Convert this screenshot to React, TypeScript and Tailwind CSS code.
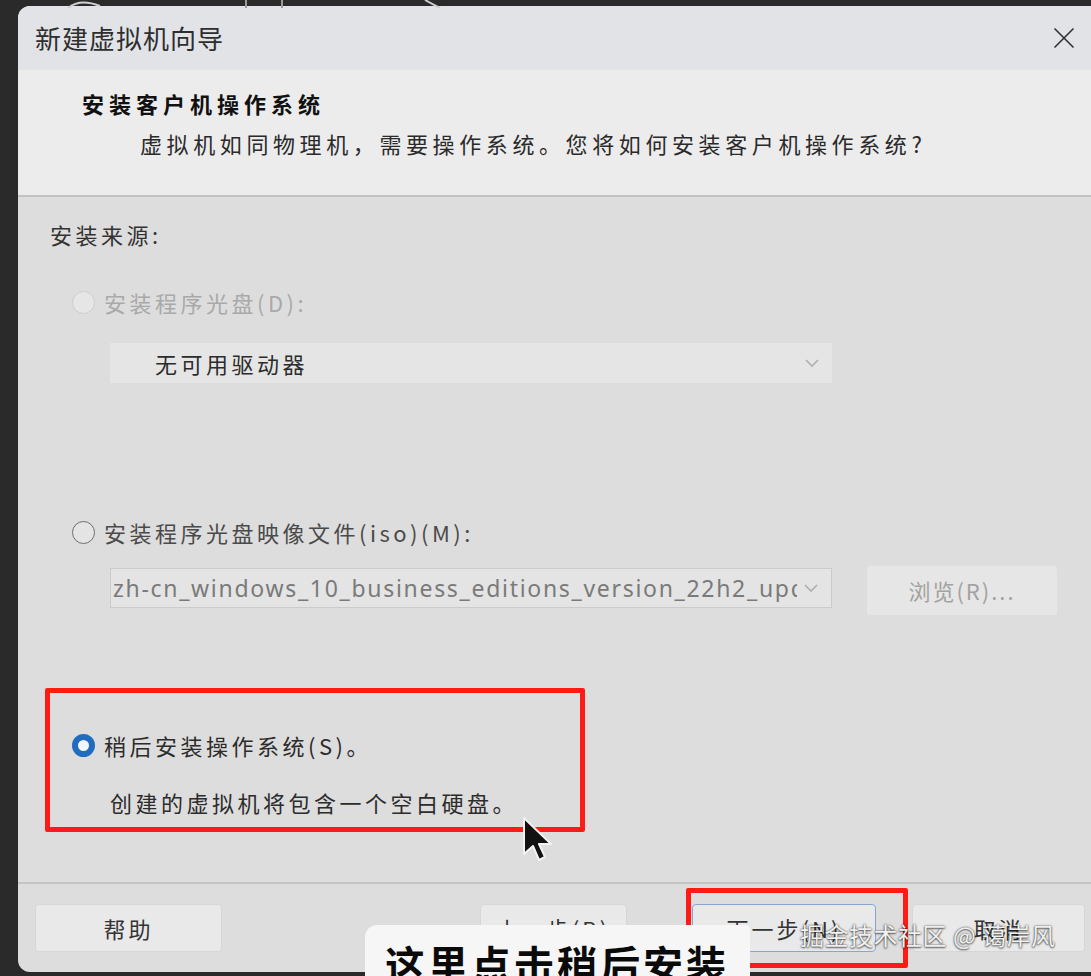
import { X } from 'lucide-react';

const cjk = "font-['Noto_Sans_CJK_SC','Noto_Sans',sans-serif]";

function Chevron() {
  return (
    <svg width="16" height="10" viewBox="0 0 16 10" className="shrink-0">
      <polyline points="2,2 8,8 14,2" fill="none" stroke="#b0b0b0" strokeWidth="1.6" />
    </svg>
  );
}

function Radio({ state }: { state: 'disabled' | 'off' | 'on' }) {
  if (state === 'on') {
    return (
      <span className="w-[23px] h-[23px] rounded-full border-[6px] border-[#1f6cc0] bg-[#f4f6fa] shrink-0" />
    );
  }
  return (
    <span
      className={`w-[23px] h-[23px] rounded-full shrink-0 border-[1.5px] ${
        state === 'disabled' ? 'border-[#cdcdcd] bg-[#e6e6e6]' : 'border-[#6e6e6e] bg-[#e4e4e4]'
      }`}
    />
  );
}

function FooterButton({ label, w, active }: { label: string; w: string; active?: boolean }) {
  return (
    <div
      className={`${w} h-[48px] rounded-[4px] bg-[#e9e9e9] border flex items-center justify-center text-[22px] tracking-[3px] text-[#333] ${
        active ? 'border-[#86a6cf]' : 'border-[#d6d6d6]'
      }`}
    >
      {label}
    </div>
  );
}

export default function App() {
  return (
    <div className={`relative w-[1091px] h-[976px] overflow-hidden bg-[#2a2a2a] pl-[18px] pt-[6px] ${cjk}`}>
      {/* background window edges peeking above the dialog */}
      <svg className="absolute top-0 left-0" width="1091" height="8">
        <path d="M68 8 Q80 -2 100 6" fill="none" stroke="#cfcfcf" strokeWidth="2" />
        <line x1="246" y1="0" x2="246" y2="8" stroke="#9a9a9a" strokeWidth="2" />
        <line x1="282" y1="0" x2="282" y2="8" stroke="#9a9a9a" strokeWidth="2" />
        <path d="M425 0 Q432 4 440 8" fill="none" stroke="#cfcfcf" strokeWidth="2" />
      </svg>

      <div className="flex flex-col w-[1073px] h-[966px] rounded-tl-[12px] rounded-bl-[12px] overflow-hidden bg-[#dddddd]">
        {/* title bar */}
        <div className="h-[64px] shrink-0 bg-[#e2e3e7] flex items-center justify-between pl-[17px] pr-[9px]">
          <span className="text-[26px] tracking-[1px] text-[#2e2e2e] leading-[30px]">新建虚拟机向导</span>
          <X size={36} strokeWidth={1.1} className="text-[#333]" />
        </div>

        {/* header */}
        <div className="h-[127px] shrink-0 bg-[#ececec] border-b-2 border-[#c2c2c2]">
          <div className="mt-[18px] ml-[64px] text-[22px] tracking-[5px] leading-[30px] font-bold text-[#111]">
            安装客户机操作系统
          </div>
          <div className="mt-[10px] ml-[122px] text-[22px] tracking-[4.6px] leading-[30px] text-[#2a2a2a]">
            虚拟机如同物理机，需要操作系统。您将如何安装客户机操作系统?
          </div>
        </div>

        {/* body */}
        <div className="h-[687px] shrink-0 pl-[32px] text-[22px] tracking-[3.5px] text-[#333] border-b-2 border-[#c4c4c4]">
          <div className="mt-[23px] leading-[28px]">安装来源:</div>

          <div className="mt-[40px] ml-[22px] flex items-center gap-[9px] leading-[28px] text-[#a9a9a9]">
            <Radio state="disabled" />
            <span>安装程序光盘(D):</span>
          </div>

          <div className="mt-[27px] ml-[60px] w-[722px] h-[40px] bg-[#e5e5e5] flex items-center justify-between pl-[45px] pr-[12px]">
            <span className="leading-[28px] text-[#2c2c2c]">无可用驱动器</span>
            <Chevron />
          </div>

          <div className="mt-[135px] ml-[22px] flex items-center gap-[9px] leading-[28px] text-[#4a4a4a]">
            <Radio state="off" />
            <span>安装程序光盘映像文件(iso)(M):</span>
          </div>

          <div className="mt-[22px] ml-[60px] flex items-start gap-[35px]">
            <div className="w-[722px] h-[40px] bg-[#e4e4e4] border border-[#cbcbcb] flex items-center pl-[2px] pr-[12px] gap-[6px]">
              <span className="flex-1 overflow-hidden whitespace-nowrap font-['Noto_Sans',sans-serif] text-[23px] tracking-[1.7px] leading-[28px] text-[#7a7a7a]">
                zh-cn_windows_10_business_editions_version_22h2_updated_sep_2023_x64_dvd.iso
              </span>
              <Chevron />
            </div>
            <div className="-mt-[2px] w-[190px] h-[49px] bg-[#e6e6e6] rounded-[3px] flex items-center justify-center text-[#a2a2a2] tracking-[2px]">
              浏览(R)...
            </div>
          </div>

          <div className="mt-[73px] -ml-[5px] w-[540px] h-[144px] border-[5px] border-[#ff1a16] rounded-[2px]">
            <div className="mt-[38px] ml-[22px] flex items-center gap-[9px] leading-[28px] text-[#2c2c2c]">
              <Radio state="on" />
              <span>稍后安装操作系统(S)。</span>
            </div>
            <div className="mt-[29px] ml-[60px] leading-[28px] text-[#2c2c2c]">创建的虚拟机将包含一个空白硬盘。</div>
          </div>
        </div>

        {/* footer */}
        <div className="flex-1 flex items-start pt-[20px] pl-[17px] pr-[6px]">
          <FooterButton label="帮助" w="w-[187px]" />
          <div className="ml-auto flex">
            <FooterButton label="上一步(B)" w="w-[147px]" />
            <div className="ml-[65px]">
              <FooterButton label="下一步(N)" w="w-[184px]" active />
            </div>
            <div className="ml-[36px]">
              <FooterButton label="取消" w="w-[173px]" />
            </div>
          </div>
        </div>
      </div>

      {/* annotation box around 下一步 */}
      <div className="absolute left-[686px] top-[888px] w-[222px] h-[80px] border-[5px] border-[#ff1a16] rounded-[2px]" />

      {/* mouse pointer */}
      <svg className="absolute left-[522px] top-[816px]" width="34" height="48" viewBox="0 0 34 48">
        <path
          d="M2 2 L2 38 L11 30 L17 44 L23 41 L17 28 L29 28 Z"
          fill="#111"
          stroke="#f2f2f2"
          strokeWidth="2"
          strokeLinejoin="round"
        />
      </svg>

      {/* video subtitle */}
      <div className="absolute left-[365px] top-[925px] w-[385px] h-[60px] bg-[#f6f6f6] rounded-tl-[12px] rounded-tr-[4px] pl-[20px] pt-[14px]">
        <div className="text-[40px] leading-[48px] font-bold tracking-[3px] text-[#0a0a0a] whitespace-nowrap">这里点击稍后安装</div>
      </div>

      {/* watermark */}
      <div className="absolute left-[800px] top-[918px] text-[24px] leading-[34px] tracking-[0.5px] text-[#f0f0f0] whitespace-nowrap [text-shadow:0_0_2px_rgba(0,0,0,0.75),0_1px_2px_rgba(0,0,0,0.5)]">
        掘金技术社区 @ 蔼岸风
      </div>
    </div>
  );
}
